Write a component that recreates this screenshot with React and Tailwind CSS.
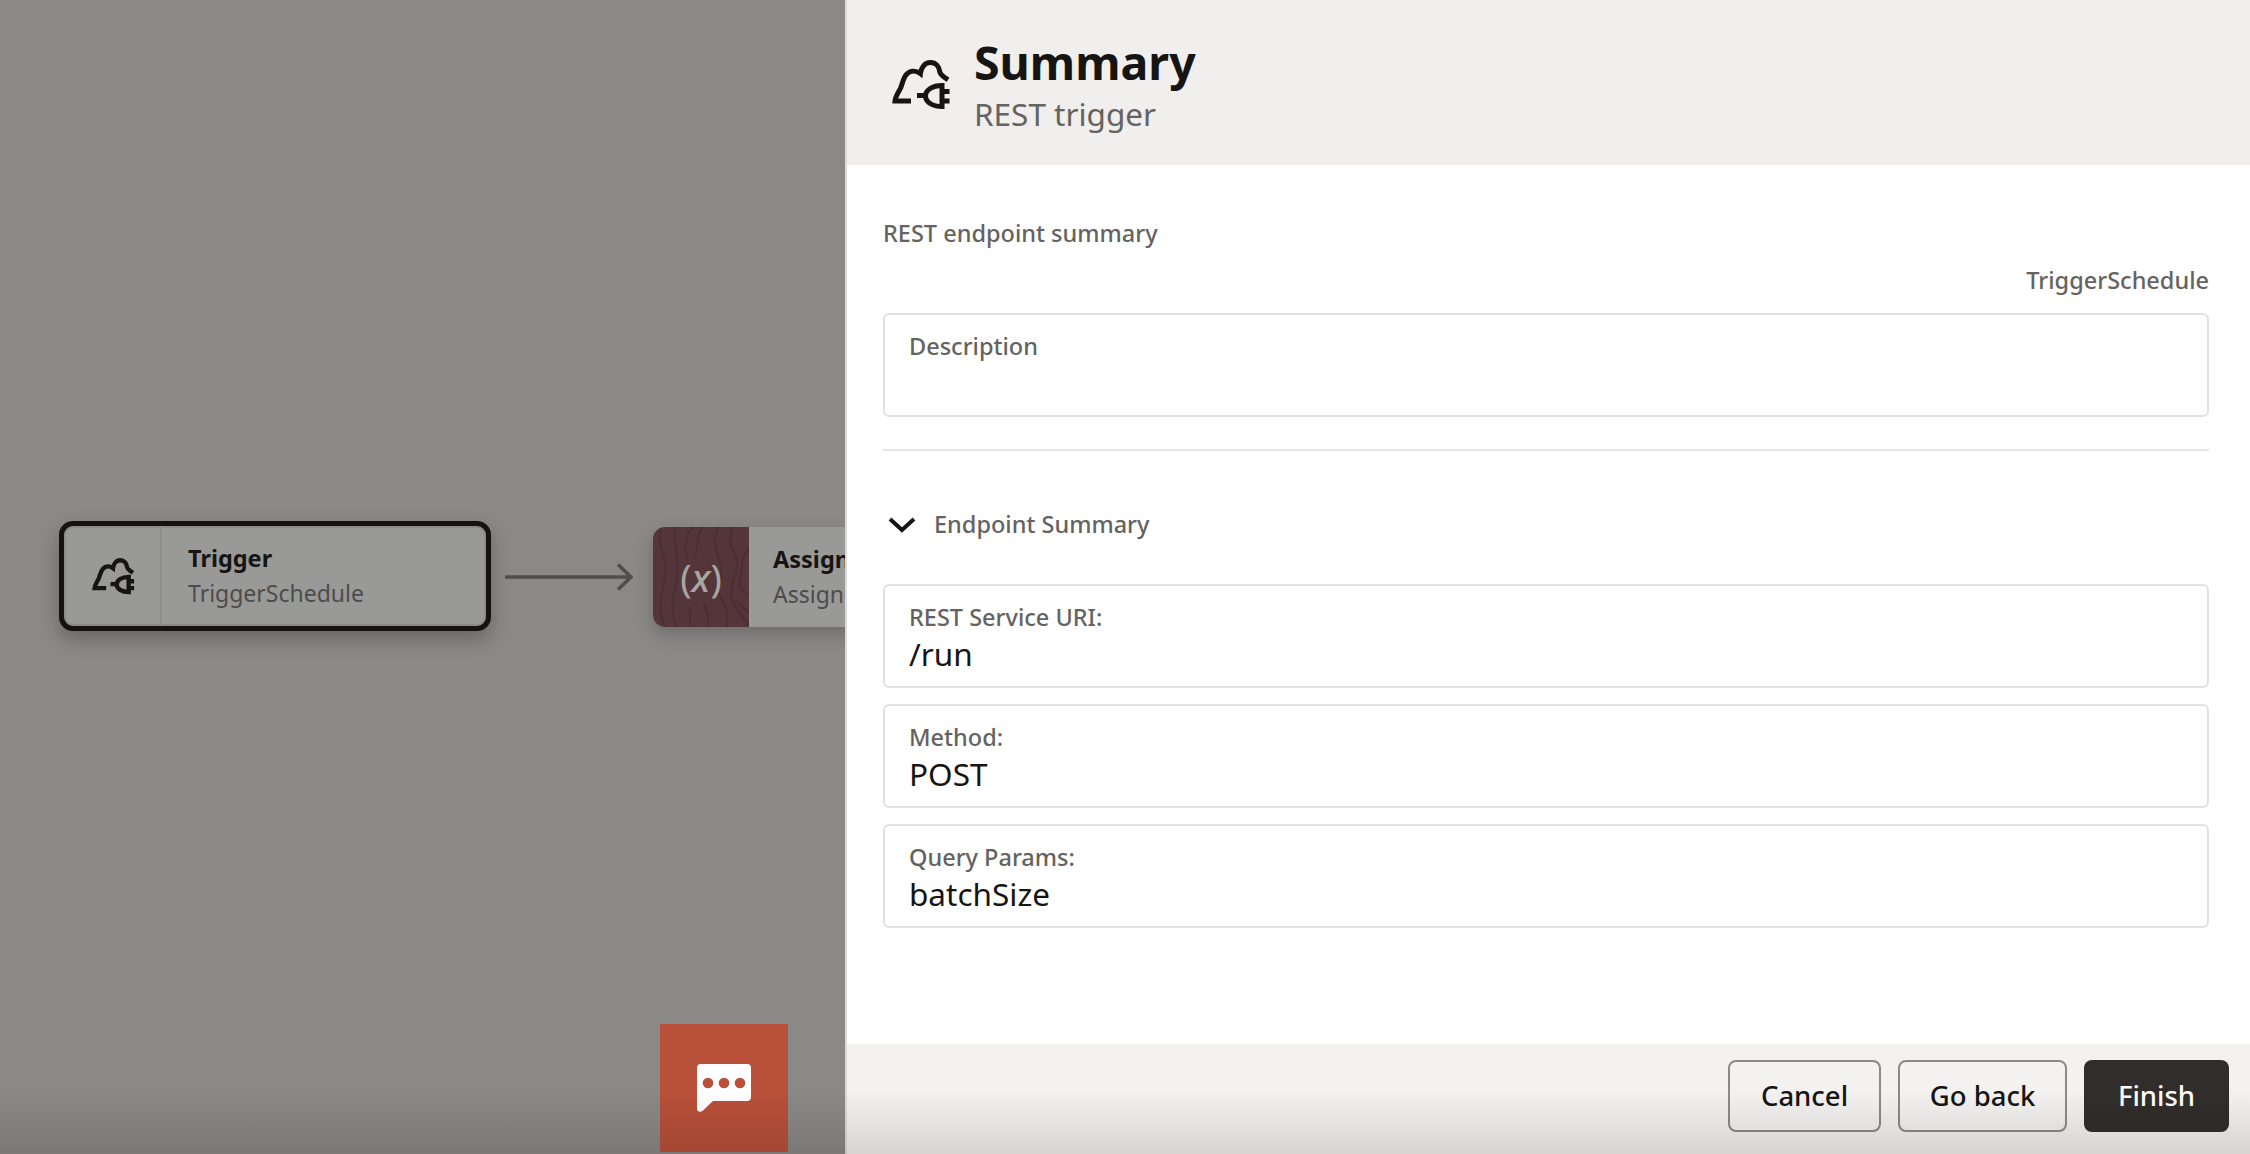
import React from "react";

const ink = "#161513";

function CloudPlug({ className, weight = 5 }) {
  return (
    <svg viewBox="0 0 80 70" fill="none" className={className} stroke={ink} strokeWidth={weight}>
      <path d="M32 51H16c.4-5 3.600-9 5.600-13 2-4.500 2.400-10 6-13.800 3.600-3.600 9-4.200 13.800-.6 .6-6 4.400-11 10-11 5.400 0 8.800 4 9.400 9.400 .6 3 4.200 5.200 8.200 7.800" />
      <path d="M38 45.500h8" />
      <path d="M63 35.500c-9.500 0-16.500 4.500-16.500 10.500S53.500 56.500 63 56.500z" />
      <path d="M62 41.500h8.500M62 51h8.500" />
    </svg>
  );
}

function WoodTexture() {
  return (
    <svg viewBox="0 0 96 100" preserveAspectRatio="none" className="absolute inset-0 h-full w-full blur-[0.6px]" fill="none" stroke="#4a2e34" strokeWidth="1.800">
      <path d="M8 0c-6 18 8 30 4 50S4 84 12 100" />
      <path d="M22 0c-4 16 6 30 2 52s-8 30 0 48" />
      <path d="M40 0c-12 14-6 24-6 34" />
      <path d="M50 0c-8 10-4 22-8 30" />
      <path d="M66 0c-10 14 0 28 2 40s-4 18-2 26 10 14 8 34" />
      <path d="M80 0c-8 14 2 24 4 34s-8 24-6 36 12 16 18 30" />
      <path d="M96 22c-10 10-6 20-8 28s-2 14 8 16" />
      <path d="M50 78c6 6 6 14 4 22" />
      <path d="M36 80c2 6 0 14 2 20" />
      <path d="M96 86c-6-4-10-10-14-12" />
    </svg>
  );
}

function Field({ label, value }) {
  return (
    <div className="h-[104px] rounded-md border-2 border-[#e2e1df] px-[24px] pt-[15px]">
      <div className="text-[23.500px] leading-[32px] font-medium text-[#646360]">{label}</div>
      {value && <div className="text-[31.500px] leading-[41px] text-[#161513]">{value}</div>}
    </div>
  );
}

function Btn({ children, className }) {
  return (
    <button className={`h-[72px] rounded-lg text-[27.500px] font-medium ${className}`}>{children}</button>
  );
}

export default function App() {
  return (
    <div className="relative flex h-[1154px] w-[2250px] overflow-hidden bg-[#8a8987] font-['Noto_Sans',sans-serif]">
      {/* canvas */}
      <div className="relative h-full w-[845px] shrink-0 overflow-hidden">
        <div className="absolute left-[59px] top-[521px] flex h-[110px] w-[432px] rounded-[14px] border-[5px] border-[#141311] bg-[#999998] shadow-[0_8px_18px_rgba(0,0,0,0.25),inset_0_0_0_2px_#8b8b89]">
          <div className="flex w-[98px] items-center justify-center border-r-2 border-[#8f8f8d]">
            <CloudPlug className="h-[51px] w-[58px]" weight={6} />
          </div>
          <div className="flex flex-col justify-center pl-[26px]">
            <div className="text-[23.500px] leading-[34px] font-bold text-[#161513]">Trigger</div>
            <div className="text-[23px] leading-[36px] text-[#4d4c4a]">TriggerSchedule</div>
          </div>
        </div>

        <svg viewBox="0 0 128 30" fill="none" className="absolute left-[505px] top-[562px] h-[30px] w-[128px]" stroke="#4f4e4b" strokeWidth="3.500">
          <path d="M0 15h126M113 2.500l13 12.500-13 12.500" />
        </svg>

        <div className="absolute left-[653px] top-[527px] flex h-[100px] w-[400px] rounded-[12px] bg-[#999998] shadow-[0_8px_18px_rgba(0,0,0,0.2)]">
          <div className="relative flex w-[96px] items-center justify-center overflow-hidden rounded-l-[12px] bg-[#54353a]">
            <WoodTexture />
            <span className="relative text-[38px] text-[#a8a5a3]">
              (<i className="font-medium">x</i>)
            </span>
          </div>
          <div className="flex flex-col justify-center pl-[24px]">
            <div className="text-[23.500px] leading-[34px] font-bold text-[#161513]">Assign</div>
            <div className="text-[23px] leading-[36px] text-[#4d4c4a]">Assign</div>
          </div>
        </div>

        <div className="absolute left-[660px] top-[1024px] flex h-[128px] w-[128px] items-center justify-center bg-[#b9503a]">
          <svg viewBox="0 0 54 48" className="h-[48px] w-[54px]">
            <path fill="#fff" d="M4 0h46a4 4 0 0 1 4 4v29a4 4 0 0 1-4 4H16L6 46.500c-2.500 2.300-6 1.500-6-2V4a4 4 0 0 1 4-4z" />
            <circle cx="11" cy="19" r="5.300" fill="#b9503a" />
            <circle cx="27" cy="19" r="5.300" fill="#b9503a" />
            <circle cx="43" cy="19" r="5.300" fill="#b9503a" />
          </svg>
        </div>
      </div>

      {/* summary drawer */}
      <div className="flex h-full flex-1 flex-col border-l-2 border-[#dcdbd9] bg-white">
        <div className="flex h-[165px] items-start bg-[#f0efed] pl-[32px]">
          <CloudPlug className="mt-[50px] h-[70px] w-[80px]" />
          <div className="ml-[15px] mt-[34px]">
            <div className="text-[46.500px] leading-[56px] font-bold text-[#161513]">Summary</div>
            <div className="mt-[2px] text-[31.500px] leading-[44px] text-[#646360]">REST trigger</div>
          </div>
        </div>

        <div className="flex-1 pl-[36px] pr-[41px]">
          <div className="mt-[52px] text-[23.500px] leading-[32px] font-medium text-[#646360]">REST endpoint summary</div>
          <div className="mt-[15px] text-right text-[23.500px] leading-[32px] font-medium text-[#646360]">TriggerSchedule</div>
          <div className="mt-[17px]">
            <Field label="Description" />
          </div>
          <div className="mt-[32px] h-[2px] bg-[#e6e5e3]" />
          <div className="mt-[56px] flex h-[36px] items-center">
            <svg viewBox="0 0 28 18" fill="none" stroke={ink} strokeWidth="4" className="ml-[5px] h-[18px] w-[28px]">
              <path d="M2 3l12 11L26 3" />
            </svg>
            <span className="ml-[18px] text-[23.500px] font-medium text-[#646360]">Endpoint Summary</span>
          </div>
          <div className="mt-[41px] flex flex-col gap-[16px]">
            <Field label="REST Service URI:" value="/run" />
            <Field label="Method:" value="POST" />
            <Field label="Query Params:" value="batchSize" />
          </div>
        </div>

        <div className="flex h-[110px] justify-end gap-[17px] bg-[#f3f2f0] pr-[21px] pt-[16px]">
          <Btn className="w-[153px] border-2 border-[#8b8a87] text-[#161513]">Cancel</Btn>
          <Btn className="w-[169px] border-2 border-[#8b8a87] text-[#161513]">Go back</Btn>
          <Btn className="w-[145px] bg-[#312d2a] text-white">Finish</Btn>
        </div>
      </div>

      {/* dim at the bottom of the page */}
      <div className="pointer-events-none absolute inset-x-0 bottom-0 h-[64px] bg-linear-to-b from-transparent to-black/12" />
    </div>
  );
}
